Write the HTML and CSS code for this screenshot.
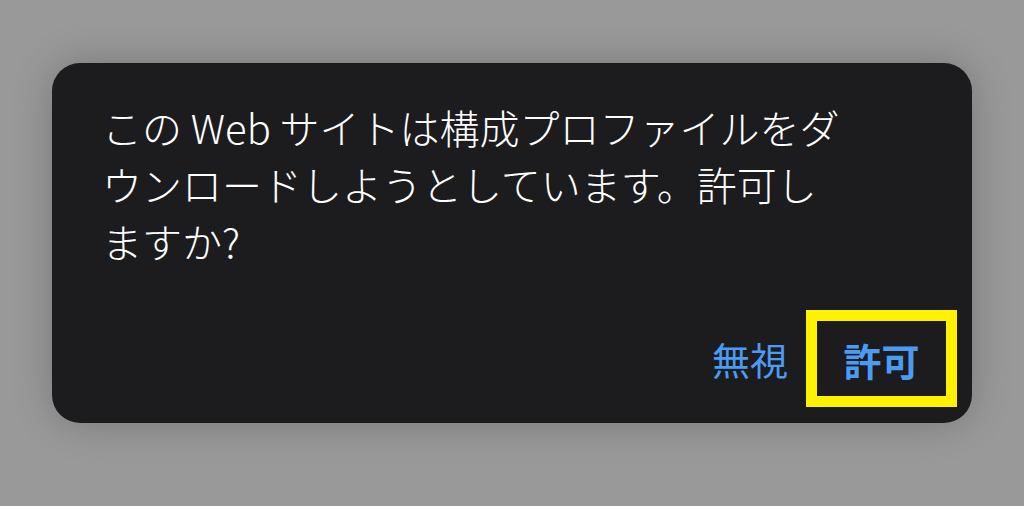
FILE: index.html
```html
<!DOCTYPE html>
<html lang="ja">
<head>
<meta charset="utf-8">
<link rel="stylesheet" href="styles.css">
</head>
<body>
<div class="alert">
  <p class="message">この Web サイトは構成プロファイルをダウンロードしようとしています。許可しますか?</p>
  <div class="actions">
    <button class="btn">無視</button>
    <button class="btn primary">許可</button>
  </div>
</div>
</body>
</html>
```
FILE: styles.css
```css
html, body {
  margin: 0;
  padding: 0;
}
body {
  width: 1024px;
  height: 506px;
  background: #999999;
  font-family: "Noto Sans CJK JP", "Noto Sans", sans-serif;
  overflow: hidden;
}
.alert {
  box-sizing: border-box;
  margin: 63px 0 0 52px;
  width: 920px;
  height: 360px;
  background: #1c1c1e;
  border-radius: 28px;
  box-shadow: 0 0 40px rgba(0, 0, 0, 0.22);
  padding: 36px 15px 16px 50px;
  display: flex;
  flex-direction: column;
}
.message {
  margin: 0;
  width: 750px;
  color: #ffffff;
  font-size: 40px;
  line-height: 57px;
  font-weight: 300;
}
.actions {
  margin-top: auto;
  display: flex;
  justify-content: flex-end;
  align-items: center;
  gap: 18px;
}
.btn {
  background: none;
  border: none;
  padding: 0;
  font-family: inherit;
  font-size: 38px;
  line-height: 1;
  color: #4b9bf3;
}
.primary {
  box-sizing: border-box;
  width: 151px;
  height: 97px;
  border: 11px solid #fff200;
  font-weight: 700;
  padding-top: 2px;
}
```
